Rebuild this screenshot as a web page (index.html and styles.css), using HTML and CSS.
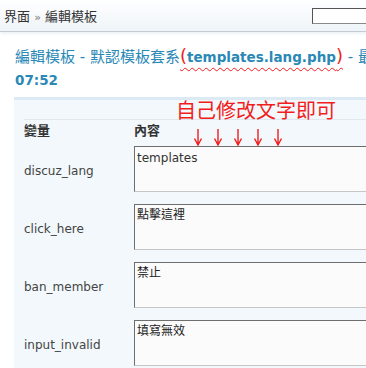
FILE: index.html
```html
<!DOCTYPE html>
<html lang="zh-Hant">
<head>
    <meta charset="UTF-8">
    <title>編輯模板</title>
    <link rel="stylesheet" href="styles.css">
</head>
<body>
<div class="page">
    <div class="topbar">
        <div class="crumbs">界面 <span class="sep">»</span> 編輯模板</div>
        <input type="text" class="search">
    </div>

    <h2 class="title">編輯模板 - 默認模板套系<span class="mark"><span class="paren">(</span><b>templates.lang.php</b><span class="paren">)</span></span> - 最後修改時間: 2008-3-27<br><b>07:52</b></h2>

    <div class="box">
        <div class="note">自己修改文字即可</div>
        <svg class="arrows" width="92" height="18" viewBox="0 0 92 18">
            <g fill="none" stroke="#f21d1d" stroke-width="1.4">
                <path d="M5 0V16M1.5 9.5L5 16L8.5 9.5"/>
                <path d="M25 0V16M21.5 9.5L25 16L28.5 9.5"/>
                <path d="M45 0V16M41.5 9.5L45 16L48.5 9.5"/>
                <path d="M65 0V16M61.5 9.5L65 16L68.5 9.5"/>
                <path d="M85 0V16M81.5 9.5L85 16L88.5 9.5"/>
            </g>
        </svg>

        <div class="head">
            <div>變量</div>
            <div>內容</div>
        </div>
        <div class="row">
            <div class="name">discuz_lang</div>
            <textarea class="latin">templates</textarea>
        </div>
        <div class="row">
            <div class="name">click_here</div>
            <textarea>點擊這裡</textarea>
        </div>
        <div class="row">
            <div class="name">ban_member</div>
            <textarea>禁止</textarea>
        </div>
        <div class="row">
            <div class="name">input_invalid</div>
            <textarea>填寫無效</textarea>
        </div>
    </div>
</div>
</body>
</html>
```

FILE: styles.css
```css
html, body {
    margin: 0;
    overflow: hidden;
    background: #fff;
}
body {
    font-family: "DejaVu Sans", "Noto Sans CJK TC", sans-serif;
    color: #333;
}
.page {
    width: 640px;
}
.topbar {
    height: 31px;
    border-bottom: 1px solid #c3ccd3;
    background: linear-gradient(#ffffff, #eef4f8);
    display: grid;
    grid-template-columns: 308px 200px;
    align-items: center;
    padding-left: 4px;
    box-shadow: 0 2px 3px #eef2f5;
}
.crumbs {
    font-size: 13px;
    color: #333;
}
.crumbs .sep {
    font-size: 11px;
    color: #777;
}
.search {
    height: 16px;
    box-sizing: border-box;
    margin: 0;
    padding: 0;
    border: 1px solid #8a8a8a;
    border-left-color: #555;
    border-top-color: #555;
    background: #fff;
}
.title {
    margin: 12px 0 5px;
    padding-left: 15px;
    font-size: 15px;
    font-weight: normal;
    line-height: 23px;
    color: #2a88b6;
    white-space: nowrap;
}
.title b {
    font-size: 13.5px;
    font-weight: bold;
}
.mark {
    text-decoration: underline wavy #f01c1c;
    text-decoration-thickness: 1px;
    text-underline-offset: 5px;
}
.paren {
    color: #f01c1c;
    font-size: 18px;
    font-family: "DejaVu Sans", sans-serif;
}
.box {
    position: relative;
    margin-left: 14px;
    border-top: 3px solid #dbeaf3;
    background: #f2f8fb;
    padding: 19px 0 0 10px;
}
.note {
    position: absolute;
    left: 162px;
    top: -1px;
    font-family: "Noto Sans CJK TC", sans-serif;
    font-size: 20px;
    line-height: 22px;
    color: #f21d1d;
}
.arrows {
    position: absolute;
    left: 179px;
    top: 29px;
}
.head {
    display: grid;
    grid-template-columns: 110px 1fr;
    box-sizing: border-box;
    height: 25px;
    padding-bottom: 6px;
    align-items: center;
    border-top: 1px solid #dfe8ef;
    font-size: 13px;
    font-weight: bold;
    color: #333;
}
.row {
    display: grid;
    grid-template-columns: 110px 1fr;
    align-items: center;
    height: 58px;
}
.name {
    font-size: 12px;
    color: #444;
    margin-top: -4px;
}
textarea {
    box-sizing: border-box;
    width: 430px;
    height: 46px;
    margin: 0 0 8px 0;
    padding: 2px 2px;
    border: 1px solid #c6c6c6;
    border-top-color: #6e6e6e;
    border-left-color: #6e6e6e;
    background: #fbfbfb;
    font-family: "Noto Sans CJK TC", sans-serif;
    font-size: 12px;
    line-height: 14px;
    color: #222;
    resize: none;
    overflow: hidden;
}
textarea.latin {
    font-family: "DejaVu Sans", sans-serif;
    color: #333;
    padding-top: 4px;
}
```
